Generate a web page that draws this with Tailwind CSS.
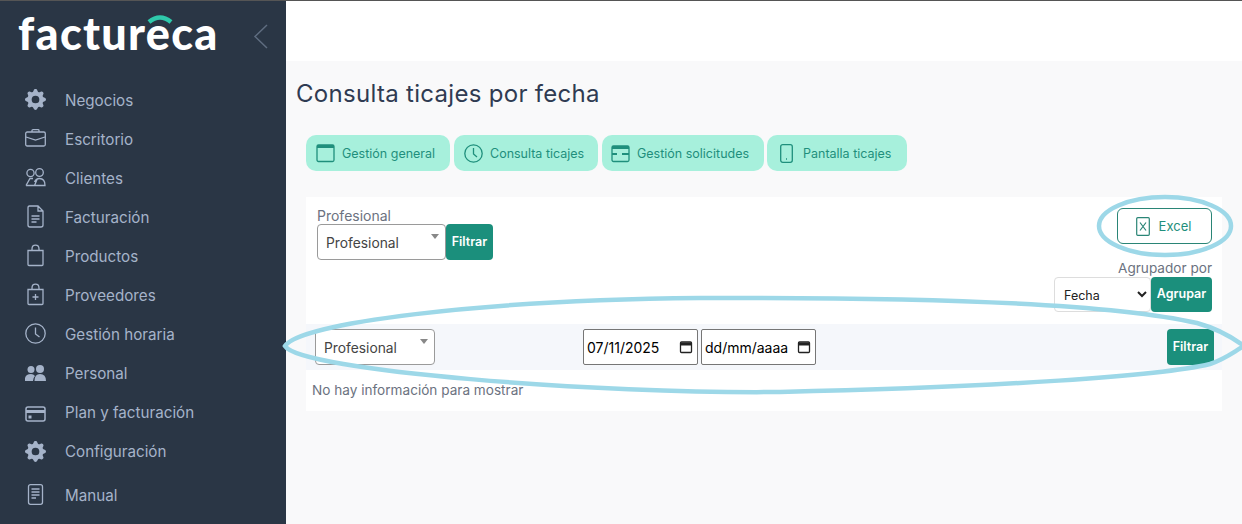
<!DOCTYPE html>
<html lang="es"><head><meta charset="utf-8"><script src="https://cdn.jsdelivr.net/npm/@tailwindcss/browser@4"></script></head>
<body class="m-0 overflow-hidden">
<div class="relative flex h-[524px] w-[1242px] overflow-hidden border-t border-[#555] bg-[#f9f9fa] font-['Inter',sans-serif]">
<aside class="flex w-[286px] shrink-0 flex-col bg-[#2a3645] text-[15.200px] text-[#a5b3c9]">
  <div class="relative h-[81px] shrink-0">
    <span class="absolute left-[18px] top-[7px] font-['Lato',sans-serif] text-[45px] font-black leading-[50px] tracking-[1.300px] text-white">factureca</span>
    <svg class="absolute left-[146px] top-[13px]" width="28" height="10" viewBox="0 0 28 10" fill="none"><path d="M3 8 Q14 -1 25 8" stroke="#2fc9ab" stroke-width="4.5"/></svg>
    <svg class="absolute left-[253px] top-[23px]" width="15" height="25" viewBox="0 0 15 25" fill="none"><path d="M14 1 2 12.500 14 24" stroke="#5f6d80" stroke-width="1.500"/></svg>
  </div>
  <nav class="flex flex-col">
    <a class="flex h-[39px] items-center"><span class="mb-[5px] flex w-[65px] justify-center pl-[14px] pr-[9px]"><svg width="21" height="21" viewBox="0 0 16 16" fill="#a5b3c9"><path d="M9.405 1.05c-.413-1.4-2.397-1.4-2.81 0l-.1.34a1.464 1.464 0 0 1-2.105.872l-.31-.17c-1.283-.698-2.686.705-1.987 1.987l.169.311c.446.82.023 1.841-.872 2.105l-.34.1c-1.4.413-1.4 2.397 0 2.81l.34.1a1.464 1.464 0 0 1 .872 2.105l-.17.31c-.698 1.283.705 2.686 1.987 1.987l.311-.169a1.464 1.464 0 0 1 2.105.872l.1.34c.413 1.4 2.397 1.4 2.81 0l.1-.34a1.464 1.464 0 0 1 2.105-.872l.31.17c1.283.698 2.686-.705 1.987-1.987l-.169-.311a1.464 1.464 0 0 1 .872-2.105l.34-.1c1.4-.413 1.4-2.397 0-2.81l-.34-.1a1.464 1.464 0 0 1-.872-2.105l.17-.31c.698-1.283-.705-2.686-1.987-1.987l-.311.169a1.464 1.464 0 0 1-2.105-.872l-.1-.34zM8 10.930a2.929 2.929 0 1 1 0-5.860 2.929 2.929 0 0 1 0 5.858z"/></svg></span>Negocios</a>
    <a class="flex h-[39px] items-center"><span class="mb-[5px] flex w-[65px] justify-center pl-[14px] pr-[9px]"><svg width="21" height="18" viewBox="0 0 21 18" fill="none" stroke="#a5b3c9" stroke-width="1.300"><rect x="0.700" y="3" width="19.600" height="14" rx="1.500"/><path d="M7 3V1.500Q7 .7 8 .7H13Q14 .7 14 1.500V3M1 8 10.500 11 20 8"/></svg></span>Escritorio</a>
    <a class="flex h-[39px] items-center"><span class="mb-[5px] flex w-[65px] justify-center pl-[14px] pr-[9px]"><svg width="21" height="19" viewBox="0 0 21 19" fill="none" stroke="#a5b3c9" stroke-width="1.300"><circle cx="5.500" cy="5" r="3.600"/><circle cx="14.500" cy="4.500" r="3.800"/><path d="M1 17.500 5 10.500H8M1 17.500H9.500L12 11.500M8.500 17.500H20Q20 10.500 14.500 10.500 11 10.500 9.500 14"/></svg></span>Clientes</a>
    <a class="flex h-[39px] items-center"><span class="mb-[5px] flex w-[65px] justify-center pl-[14px] pr-[9px]"><svg width="21" height="23" viewBox="0 0 21 23" fill="none" stroke="#a5b3c9" stroke-width="1.300"><path d="M4.500 1H13L18 6V20Q18 22 16 22H5Q3 22 3 20V3Q3 1 4.500 1ZM13 1V6H18M6.500 11H14.500M6.500 14H14.500M6.500 17H11.500"/></svg></span>Facturación</a>
    <a class="flex h-[39px] items-center"><span class="mb-[4px] flex w-[65px] justify-center pl-[14px] pr-[9px]"><svg width="21" height="23" viewBox="0 0 21 23" fill="none" stroke="#a5b3c9" stroke-width="1.300"><path d="M3 6.500H18V20.500Q18 21.500 17 21.500H4Q3 21.500 3 20.500ZM7 6.500V5Q7 1.200 10.500 1.200 14 1.200 14 5V6.500"/></svg></span>Productos</a>
    <a class="flex h-[39px] items-center"><span class="mb-[5px] flex w-[65px] justify-center pl-[14px] pr-[9px]"><svg width="21" height="23" viewBox="0 0 21 23" fill="none" stroke="#a5b3c9" stroke-width="1.300"><path d="M3 6.500H18V20.500Q18 21.500 17 21.500H4Q3 21.500 3 20.500ZM7 6.500V5Q7 1.200 10.500 1.200 14 1.200 14 5V6.500M10.500 11V17M7.500 14H13.500"/></svg></span>Proveedores</a>
    <a class="flex h-[39px] items-center"><span class="mb-[5px] flex w-[65px] justify-center pl-[14px] pr-[9px]"><svg width="21" height="21" viewBox="0 0 21 21" fill="none" stroke="#a5b3c9" stroke-width="1.300"><circle cx="10.500" cy="10.500" r="9.700"/><path d="M10.500 4.500V11L14.500 14"/></svg></span>Gestión horaria</a>
    <a class="flex h-[39px] items-center"><span class="mb-[3px] flex w-[65px] justify-center pl-[14px] pr-[9px]"><svg width="21" height="17" viewBox="0 0 21 17" fill="#a5b3c9"><circle cx="6" cy="4.500" r="3.500"/><circle cx="15" cy="4" r="4"/><path d="M0 16V13Q1 9 6 9 8.500 9 10 11 8 13 8 16ZM9.500 16Q9.500 9 15 9 21 9 21 16Z"/></svg></span>Personal</a>
    <a class="flex h-[39px] items-center"><span class="flex w-[65px] justify-center pl-[14px] pr-[9px]"><svg width="21" height="16" viewBox="0 0 21 16" fill="none" stroke="#a5b3c9"><rect x="1" y="1" width="19" height="14" rx="2" stroke-width="1.500"/><path d="M1 5.500H20" stroke-width="3"/><rect x="3.500" y="9.500" width="3" height="3" fill="#a5b3c9" stroke="none"/></svg></span>Plan y facturación</a>
    <a class="flex h-[39px] items-center"><span class="mb-[2px] flex w-[65px] justify-center pl-[14px] pr-[9px]"><svg width="21" height="21" viewBox="0 0 16 16" fill="#a5b3c9"><path d="M9.405 1.05c-.413-1.4-2.397-1.4-2.81 0l-.1.34a1.464 1.464 0 0 1-2.105.872l-.31-.17c-1.283-.698-2.686.705-1.987 1.987l.169.311c.446.82.023 1.841-.872 2.105l-.34.1c-1.4.413-1.4 2.397 0 2.81l.34.1a1.464 1.464 0 0 1 .872 2.105l-.17.31c-.698 1.283.705 2.686 1.987 1.987l.311-.169a1.464 1.464 0 0 1 2.105.872l.1.34c.413 1.4 2.397 1.4 2.81 0l.1-.34a1.464 1.464 0 0 1 2.105-.872l.31.17c1.283.698 2.686-.705 1.987-1.987l-.169-.311a1.464 1.464 0 0 1 .872-2.105l.34-.1c1.4-.413 1.4-2.397 0-2.81l-.34-.1a1.464 1.464 0 0 1-.872-2.105l.17-.31c.698-1.283-.705-2.686-1.987-1.987l-.311.169a1.464 1.464 0 0 1-2.105-.872l-.1-.34zM8 10.930a2.929 2.929 0 1 1 0-5.860 2.929 2.929 0 0 1 0 5.858z"/></svg></span>Configuración</a>
    <a class="mt-[5px] flex h-[39px] items-center"><span class="mb-[4px] flex w-[65px] justify-center pl-[14px] pr-[9px]"><svg width="21" height="21" viewBox="0 0 21 21" fill="none" stroke="#a5b3c9" stroke-width="1.300"><rect x="3.500" y="0.700" width="14" height="19.600" rx="2"/><path d="M6.500 5H14.500M6.500 8H14.500M6.500 11H14.500M6.500 14H11"/></svg></span>Manual</a>
  </nav>
</aside>
<main class="flex min-w-0 flex-1 flex-col">
  <header class="h-[60px] shrink-0 bg-white"></header>
  <div class="pl-[10px] pr-[20px]">
    <h1 class="mt-[18px] text-[24px] font-normal leading-[30px] tracking-[0.3px] text-[#2f3b52]">Consulta ticajes por fecha</h1>
    <div class="ml-[10px] mt-[26px] flex gap-[4px] text-[12.500px] text-[#1f8f7c]">
      <a class="flex h-[36px] w-[144px] items-center gap-[7px] rounded-[10px] bg-[#a7f0dc] pl-[10px]"><svg width="19" height="20" viewBox="0 0 19 20" fill="none" stroke="#1f8f7c" stroke-width="1.300"><rect x="1" y="2" width="17" height="16.500" rx="1.500"/><path d="M1 3.500H18" stroke-width="3"/></svg><span class="mt-[2px]">Gestión general</span></a>
      <a class="flex h-[36px] w-[144px] items-center gap-[7px] rounded-[10px] bg-[#a7f0dc] pl-[10px]"><svg width="19" height="19" viewBox="0 0 19 19" fill="none" stroke="#1f8f7c" stroke-width="1.300"><circle cx="9.500" cy="9.500" r="8.700"/><path d="M9.500 4V10L13 13"/></svg><span class="mt-[2px]">Consulta ticajes</span></a>
      <a class="flex h-[36px] w-[162px] items-center gap-[7px] rounded-[10px] bg-[#a7f0dc] pl-[9px]"><svg width="19" height="19" viewBox="0 0 19 19" fill="none" stroke="#1f8f7c" stroke-width="1.300"><rect x="1" y="2" width="17" height="15.500" rx="1.500"/><path d="M1 3.500H18" stroke-width="3"/><path d="M1 10H6M11 10H18" stroke-width="2"/></svg><span class="mt-[2px]">Gestión solicitudes</span></a>
      <a class="-ml-[1px] flex h-[36px] w-[140px] items-center gap-[10px] rounded-[10px] bg-[#a7f0dc] pl-[13px]"><svg width="13" height="19" viewBox="0 0 13 19" fill="none" stroke="#1f8f7c" stroke-width="1.300"><rect x=".7" y=".7" width="11.600" height="17.600" rx="2"/><path d="M6 15H7"/></svg><span class="mt-[2px]">Pantalla ticajes</span></a>
    </div>
    <section class="ml-[10px] mt-[26px] h-[214px] bg-white pt-[11px]">
      <div class="flex h-[52px] justify-between pl-[11px] pr-[10px]">
        <div>
          <div class="text-[14px] leading-[16px] text-[#6b7280]">Profesional</div>
          <div class="flex">
            <div class="relative flex h-[36px] w-[129px] items-center rounded-[4px] border border-[#9a9a9a] pl-[8px] pt-[2px] text-[13.800px] text-[#444]">Profesional<span class="absolute right-[6px] top-[9px] h-0 w-0 border-x-[4px] border-t-[5px] border-x-transparent border-t-[#888]"></span></div>
            <button class="h-[36px] w-[47px] rounded-[4px] bg-[#1b8f7c] text-[12.500px] font-semibold text-white">Filtrar</button>
          </div>
        </div>
        <button class="flex h-[36px] w-[95px] items-center justify-center gap-[9px] rounded-[6px] border border-[#2a8576] pr-[2px] text-[13px] text-[#1f8f7c]"><svg width="14" height="19" viewBox="0 0 14 19" fill="none" stroke="#2a8576" stroke-width="1.200"><rect x=".7" y=".7" width="12.600" height="17.600" rx="1"/><path d="M4 5.500 10 13.500M10 5.500 4 13.500"/></svg><span class="mt-[1px]">Excel</span></button>
      </div>
      <div class="flex flex-col items-end pr-[10px]">
        <div class="text-[13.600px] leading-[16px] text-[#6b7280]">Agrupador por</div>
        <div class="mt-[1px] flex">
          <select class="h-[35px] w-[97px] rounded-[4px] border border-[#ddd] bg-white pl-[5px] pt-[2px] text-[12.500px] text-[#222]"><option>Fecha</option></select>
          <button class="h-[35px] w-[61px] rounded-[4px] bg-[#1b8f7c] text-[12.500px] font-semibold text-white">Agrupar</button>
        </div>
      </div>
      <div class="mt-[12px] flex h-[46px] items-center bg-[#f5f7fb] pl-[9px] pr-[8px]">
        <div class="relative flex h-[36px] w-[120px] items-center rounded-[4px] border border-[#9a9a9a] bg-white pl-[8px] pt-[2px] text-[13.800px] text-[#444]">Profesional<span class="absolute right-[6px] top-[9px] h-0 w-0 border-x-[4px] border-t-[5px] border-x-transparent border-t-[#888]"></span></div>
        <div class="ml-[148px] flex h-[36px] w-[115px] items-center justify-between rounded-[2px] border border-[#767676] bg-white pl-[3px] pr-[4px] text-[14px] text-black">07/11/2025<svg width="14" height="14" viewBox="0 0 14 14" fill="none" stroke="#222"><rect x="1.500" y="2" width="11" height="10.500" rx="1" stroke-width="1.300"/><path d="M1.500 4H12.500" stroke-width="3"/></svg></div>
        <div class="ml-[3px] flex h-[36px] w-[115px] items-center justify-between rounded-[2px] border border-[#767676] bg-white pl-[3px] pr-[4px] text-[14px] text-black">dd/mm/aaaa<svg width="14" height="14" viewBox="0 0 14 14" fill="none" stroke="#222"><rect x="1.500" y="2" width="11" height="10.500" rx="1" stroke-width="1.300"/><path d="M1.500 4H12.500" stroke-width="3"/></svg></div>
        <button class="ml-auto h-[36px] w-[47px] rounded-[4px] bg-[#1b8f7c] text-[12.500px] font-semibold text-white">Filtrar</button>
      </div>
      <p class="mt-[12px] pl-[6px] text-[13.600px] leading-[16px] text-[#6b7280]">No hay información para mostrar</p>
    </section>
  </div>
</main>
<svg class="pointer-events-none absolute left-0 top-0" width="1242" height="524" viewBox="0 0 1242 524" fill="none" stroke="#9dd8e8" stroke-width="4.500">
  <ellipse cx="1165" cy="225" rx="66" ry="29"/>
  <path d="M285 345C300 322 480 299 700 297C900 296 1100 300 1197 322C1215 327 1232 336 1244 345C1232 352 1225 358 1210 363C1160 375 1000 386 780 391C600 393 300 370 285 345Z"/>
</svg>
</div>
</body></html>
